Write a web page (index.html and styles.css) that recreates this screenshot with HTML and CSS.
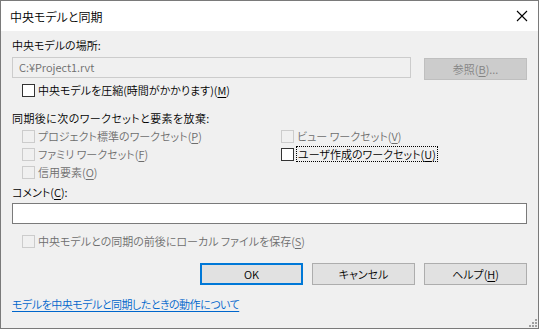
FILE: index.html
```html
<!DOCTYPE html>
<html lang="ja">
<head>
  <meta charset="UTF-8">
  <title>中央モデルと同期</title>
  <link rel="stylesheet" href="styles.css">
</head>
<body>
  <div class="window">
    <!-- Title bar -->
    <div class="titlebar">
      <span class="title">中央モデルと同期</span>
      <svg class="close" width="12" height="12" viewBox="0 0 12 12">
        <path d="M1 1 L11 11 M11 1 L1 11" stroke="#000" stroke-width="1.1" fill="none"/>
      </svg>
    </div>

    <!-- Dialog content -->
    <div class="content">
      <div class="label first">中央モデルの場所:</div>
      <div class="path-row">
        <div class="textbox disabled">C:¥Project1.rvt</div>
        <div class="button browse">参照(<u>B</u>)...</div>
      </div>

      <label class="check compress"><span class="box"></span>中央モデルを圧縮(時間がかかります)(<u>M</u>)</label>

      <div class="label discard">同期後に次のワークセットと要素を放棄:</div>
      <div class="options">
        <label class="check off"><span class="box"></span>プロジェクト標準のワークセット(<u>P</u>)</label>
        <label class="check off"><span class="box"></span>ビュー ワークセット(<u>V</u>)</label>
        <label class="check off"><span class="box"></span>ファミリ ワークセット(<u>F</u>)</label>
        <label class="check"><span class="box"></span><span class="focus">ユーザ作成のワークセット(<u>U</u>)</span></label>
        <label class="check off"><span class="box"></span>信用要素(<u>O</u>)</label>
      </div>

      <div class="label comment">コメント(<u>C</u>):</div>
      <div class="textbox comment-box"></div>

      <label class="check off save"><span class="box"></span>中央モデルとの同期の前後にローカル ファイルを保存(<u>S</u>)</label>

      <div class="actions">
        <div class="button default">OK</div>
        <div class="button">キャンセル</div>
        <div class="button">ヘルプ(<u>H</u>)</div>
      </div>

      <a class="help-link" href="#">モデルを中央モデルと同期したときの動作について</a>
    </div>

    <svg class="grip" width="10" height="10" viewBox="0 0 10 10">
      <g fill="#a0a0a0">
        <rect x="8" y="2" width="2" height="2"/>
        <rect x="5" y="5" width="2" height="2"/>
        <rect x="8" y="5" width="2" height="2"/>
        <rect x="2" y="8" width="2" height="2"/>
        <rect x="5" y="8" width="2" height="2"/>
        <rect x="8" y="8" width="2" height="2"/>
      </g>
    </svg>
  </div>
</body>
</html>
```

FILE: styles.css
```css
/* Dialog window */
body {
  margin: 0;
  font-family: "Noto Sans CJK JP", "Noto Sans", sans-serif;
  font-size: 11px;
  font-weight: 350;
  font-feature-settings: "palt";
  color: #000;
  background: #fff;
}
.window {
  position: relative;
  width: 539px;
  height: 329px;
  box-sizing: border-box;
  border: 1px solid #7a7a7a;
  background: #f0f0f0;
}
.titlebar {
  height: 30px;
  background: #fff;
  display: flex;
  align-items: center;
  justify-content: space-between;
  padding: 0 10px 0 9px;
}
.title {
  font-size: 12px;
}
.content {
  padding: 0 11px;
}
.label {
  line-height: 16px;
  height: 16px;
}
.label.first {
  margin-top: 6px;
}
u {
  text-decoration-thickness: 1px;
  text-underline-offset: 2px;
}

/* Text boxes */
.path-row {
  display: flex;
  align-items: flex-start;
  justify-content: space-between;
  margin-top: 4px;
}
.textbox {
  box-sizing: border-box;
  border: 1px solid #7a7a7a;
  background: #fff;
  height: 21px;
  line-height: 19px;
  padding: 0 6px;
}
.textbox.disabled {
  width: 399px;
  border-color: #cccccc;
  background: #f0f0f0;
  color: #6d6d6d;
}
.comment-box {
  width: 515px;
  margin-top: 3px;
}

/* Buttons */
.button {
  box-sizing: border-box;
  width: 103px;
  height: 22px;
  border: 1px solid #adadad;
  background: #e1e1e1;
  text-align: center;
  line-height: 20px;
}
.button.browse {
  margin-top: 1px;
  background: #cccccc;
  border-color: #bfbfbf;
  color: #838383;
}
.button.default {
  border: 2px solid #0078d7;
  line-height: 18px;
}
.actions {
  display: flex;
  justify-content: flex-end;
  gap: 9px;
  margin-top: 13px;
}

/* Check boxes */
.check {
  display: flex;
  align-items: center;
  height: 18px;
  padding-left: 10px;
  white-space: nowrap;
}
.box {
  box-sizing: border-box;
  width: 13px;
  height: 13px;
  border: 1px solid #333;
  background: #fff;
  margin-right: 3px;
  flex: none;
}
.check.off {
  color: #6d6d6d;
}
.check.off .box {
  border-color: #cccccc;
  background: #f0f0f0;
}
.check.compress {
  margin-top: 1px;
}
.label.discard {
  margin-top: 11px;
  letter-spacing: 0.4px;
}
.options {
  display: grid;
  grid-template-columns: 259px 1fr;
  margin-top: 1px;
}
.focus {
  outline: 1px dotted #000;
  line-height: 14px;
  padding: 0 1px;
}
.label.comment {
  margin-top: 3px;
}
.check.save {
  margin-top: 8px;
}

/* Footer link */
.help-link {
  display: inline-block;
  margin-top: 11px;
  color: #0066cc;
  letter-spacing: -0.5px;
  text-decoration: underline;
  text-underline-offset: 2px;
}
.grip {
  position: absolute;
  right: 1px;
  bottom: 1px;
}
```
